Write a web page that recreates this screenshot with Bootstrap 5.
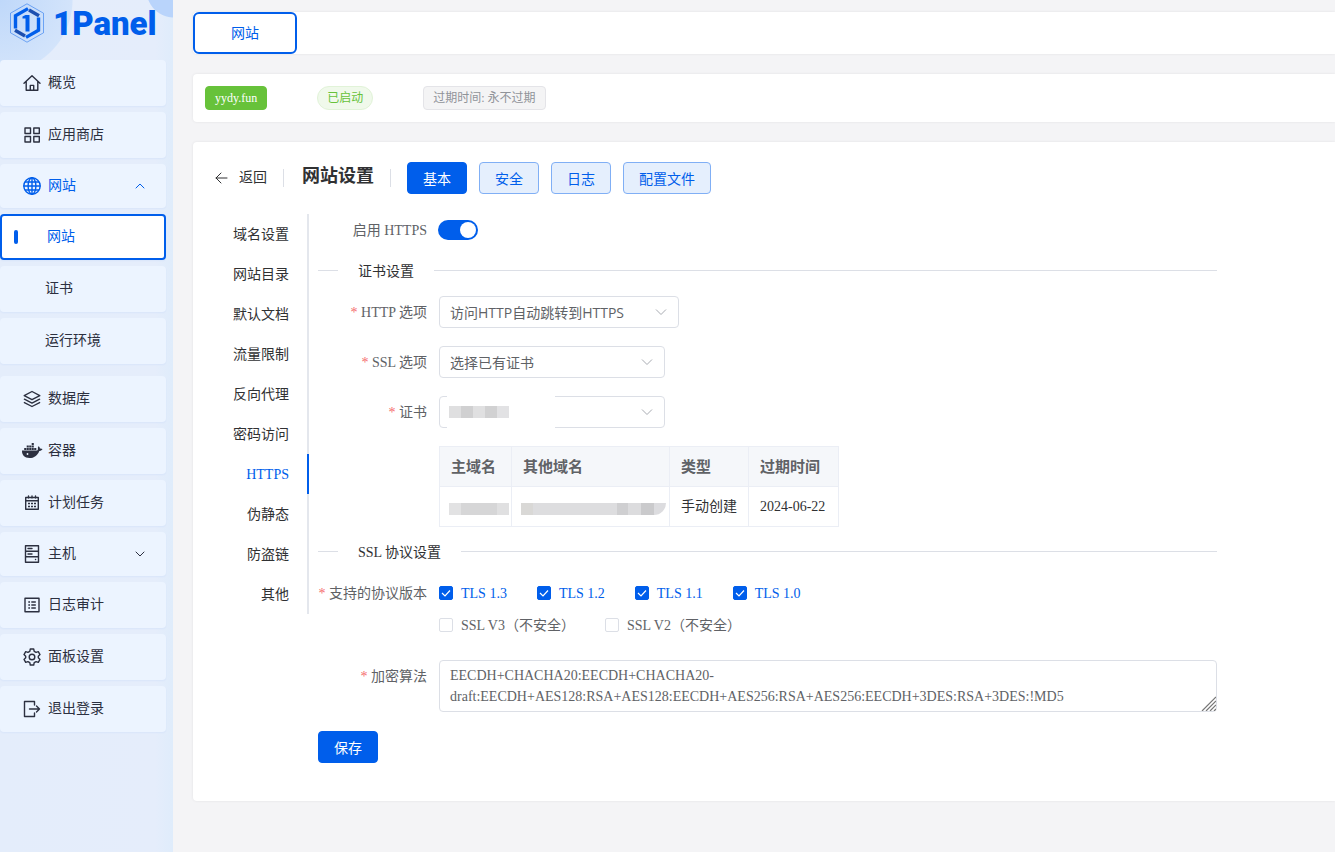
<!DOCTYPE html>
<html lang="zh-CN">
<head>
<meta charset="utf-8">
<meta name="viewport" content="width=device-width, initial-scale=1">
<title>1Panel</title>
<link href="https://cdn.jsdelivr.net/npm/bootstrap@5.3.0/dist/css/bootstrap.min.css" rel="stylesheet">
<style>
:root{--brand:#005eeb;--ink:#303133;--soft:#606266;--line:#dcdfe6}
body{font-family:"Liberation Serif","Noto Sans CJK SC",serif;font-size:14px;line-height:20px;color:var(--ink);background:#f4f4f6}
a{color:inherit;text-decoration:none}
.sans{font-family:"Open Sans","Noto Sans CJK SC",sans-serif}
.side{width:173px;background:
  radial-gradient(circle at 174px -10px,#b9d4fb 0 27px,transparent 28px),
  radial-gradient(circle at 0 0,#bfd8fa 0,#d3e4fb 72px,transparent 73px),
  linear-gradient(90deg,#e4edfb,#e5edfb 155px,#dfecfb)}
.brand{height:60px;padding:3px 0 0 9px}
.brand-name{font:900 33px/42px Roboto,sans-serif;color:var(--brand)}
.menu-item{height:46px;width:166px;margin-bottom:6px;padding-left:23px;border-radius:4px;background:#ecf4ff;box-shadow:0 1px 2px rgba(0,94,235,.05);color:#2c3040}
.menu-item svg{width:18px;height:18px;margin-right:7px}
.menu-parent{height:44px}
.menu-parent.open{color:var(--brand)}
.menu-parent .chev{width:10px;height:10px;margin:0 21px 0 auto;stroke-width:1}
.sub-item{padding-left:45px}
.sub-item.current{background:#fff;border:2px solid var(--brand);padding-left:12px;color:var(--brand)}
.sub-item.current::before{content:"";width:4px;height:14px;border-radius:2px;background:var(--brand);margin-right:29px}
.ic{fill:none;stroke:currentColor;stroke-width:1.4;stroke-linejoin:round;stroke-linecap:round;flex:none}
.main{padding:12px 0 0 20px}
.panel{background:#fff;border-radius:4px 0 0 4px;box-shadow:0 0 3px rgba(0,0,0,.08)}
.info-panel{margin-top:20px;padding:12px}
.set-panel{margin-top:20px;padding:20px 0 38px 7px}
.set-head{padding-left:15px;margin-bottom:20px}
.tab-btn{width:104px;height:42px;border:2px solid var(--brand);border-radius:6px;background:#fff;color:var(--brand);padding:0}
.chip{height:24px;padding:0 9px;border:1px solid;border-radius:4px;font-size:12px;line-height:22px}
.chip-site{background:#67c23a;border-color:#67c23a;color:#fff}
.chip-on{background:#f0f9eb;border-color:#e1f3d8;color:#67c23a;border-radius:12px;margin:0 50px}
.chip-info{background:#f4f4f5;border-color:#e4e4e8;color:#909399}
.vr-line{width:1px;height:18px;background:var(--line);margin:0 16px}
.page-title{font-size:18px;line-height:24px;font-weight:700;margin:0 0 4px 2px}
.act{height:32px;padding:1px 15px 0;font-size:14px;line-height:28px;border-radius:4px;border:1px solid #80aff5;background:#e5effd;color:var(--brand)}
.act.main-act,.act.main-act:hover{background:var(--brand);border-color:var(--brand);color:#fff}
.back{gap:10px;line-height:22px}
.side-nav{width:100px;margin-left:9px;border-right:2px solid #e4e7ed}
.side-nav a{height:40px;line-height:42px;padding-right:18px;text-align:right;margin-right:-2px;border-right:2px solid transparent}
.side-nav a.current{color:var(--brand);border-color:var(--brand)}
.settings{max-width:899px;margin-left:9px}
.field{margin-bottom:18px}
.field-lg{margin-bottom:19px}
.field-label{width:109px;line-height:32px;padding-top:1px;height:32px;text-align:right;color:var(--soft);margin-right:12px;flex:none;white-space:nowrap}
.req::before{content:"* ";color:#f56c6c}
.form-select{height:32px;padding:0 36px 0 10px;font-size:14px;border:1px solid var(--line);border-radius:4px;color:var(--soft);background-size:12px 12px;background-position:right 11px center;background-image:url("data:image/svg+xml,%3Csvg xmlns='http://www.w3.org/2000/svg' viewBox='0 0 12 12'%3E%3Cpath d='M1 3.5 6 8.5 11 3.5' fill='none' stroke='%23a8abb2'/%3E%3C/svg%3E")}
.w-mode{width:240px}.w-cert{width:226px}
.form-switch .form-check-input{width:40px;height:20px;margin:0 0 0 -1px;border:0;background-size:20px 16px;background-color:#dcdfe6;
 background-image:url("data:image/svg+xml,%3Csvg xmlns='http://www.w3.org/2000/svg' viewBox='0 0 20 16'%3E%3Ccircle cx='10' cy='8' r='8' fill='white'/%3E%3C/svg%3E")!important}
.form-switch .form-check-input:checked{background-color:var(--brand);background-position:right center}
.section-head{height:50px}
.section-head::before,.section-head::after{content:"";height:1px;background:var(--line);width:20px;margin-bottom:2px}
.section-head::after{flex:1}
.section-head h2{font-size:14px;line-height:20px;font-weight:400;margin:0;padding:1px 20px 0}
.cert-table{width:399px;table-layout:fixed;margin:0;border-color:#ebeef5;color:var(--ink)}
.cert-table th,.cert-table td{height:40px;padding:0 0 0 11px;border:1px solid #ebeef5;vertical-align:middle;white-space:nowrap}
.cert-table th{font-size:15px;color:var(--soft);background:#f5f7fa}
.col-main{width:72px}.col-other{width:158px}.col-kind{width:79px}.col-due{width:90px}
.veil{top:-1px;left:8px;width:108px;height:34px;background:#fff;padding:11px 0 0 2px}
.mosaic{height:12px;width:60px;background:linear-gradient(90deg,#dfdfe0 20%,#d0d0d1 20% 40%,#e0e0e1 40% 60%,#d1d1d2 60% 80%,#e2e2e4 80%)}
.mosaic-a{margin:4px 0 0 -2px;background:linear-gradient(90deg,#e2e2e3 20%,#d6d6d7 20% 80%,#e0e0e1 80%)}
.mosaic-b{width:145px;margin:4px 0 0 -2px;border-radius:0 0 12px 0;background:linear-gradient(90deg,#d9d8d6 8%,#dddddf 8% 66%,#cfcfd1 66% 74%,#dcdcde 74% 83%,#cacacc 83% 92%,#dcdcdf 92%)}
.opt{height:32px;display:flex;align-items:center;margin-right:30px}
.opt .form-check-input{width:14px;height:14px;margin:0 8px 0 0;border:1px solid var(--line);border-radius:2px;float:none}
.opt .form-check-input:checked{background-color:var(--brand);border-color:var(--brand);background-size:12px 12px;background-image:url("data:image/svg+xml,%3Csvg xmlns='http://www.w3.org/2000/svg' viewBox='0 0 12 12'%3E%3Cpath d='M2 6 5 9 10 3.500' fill='none' stroke='white' stroke-width='1.200'/%3E%3C/svg%3E")}
.opt .form-check-input:checked+label{color:var(--brand)}
.opt label{color:var(--soft);padding-top:1px}
.cipher{height:52px;min-height:52px;padding:4px 10px;font-size:14px;line-height:21px;border:1px solid var(--line);border-radius:4px;color:var(--soft);overflow:hidden}
.cipher::-webkit-resizer{background:url("data:image/svg+xml,%3Csvg xmlns='http://www.w3.org/2000/svg' width='15' height='15'%3E%3Cpath d='M1 15 15 1M5 15 15 5M9 15 15 9M13 15 15 13' stroke='%23777' stroke-width='1.2'/%3E%3C/svg%3E") right bottom no-repeat}
</style>
</head>
<body>
<div class="d-flex min-vh-100">
<aside class="side flex-shrink-0">
  <a href="#" class="brand d-flex align-items-start">
    <svg width="36" height="40" viewBox="0 0 36 40" fill="none" stroke="#005eeb" class="me-2 flex-shrink-0"><path d="M18 .8 34.5 10.2V29.800L18 39.200 1.500 29.800V10.200Z" stroke-width=".8" opacity=".6"/><path d="M19 5.600 6.500 12.800V25.500" stroke-width="3.400"/><path d="M17 34.400 29.500 27.200V14.500" stroke-width="3.400"/><path d="M6 27.200 16 33M20 7 30 12.800" stroke="#1c4fb0" stroke-width="3.400"/><path d="M13.500 13.500 16.500 12H20.500V28.500H16.500V15.500H13.500Z" fill="#005eeb" stroke="none"/></svg>
    <span class="brand-name">1Panel</span>
  </a>
  <nav>
    <a href="#" class="menu-item d-flex align-items-center"><svg class="ic" viewBox="0 0 18 18"><path d="M1 9.200 9 1.800l8 7.400M3.200 7.500v8.800h11.600V7.500M7.300 16v-4.600h3.400V16"/></svg>概览</a>
    <a href="#" class="menu-item d-flex align-items-center"><svg class="ic" viewBox="0 0 18 18"><path d="M2 2h5.500v5.500H2zM10.800 2h5.500v5.500h-5.500zM2 10.500h5.500V16H2zM10.800 10.500h5.500V16h-5.500z"/></svg>应用商店</a>
    <a href="#" class="menu-item menu-parent open d-flex align-items-center"><svg class="ic" viewBox="0 0 18 18"><circle cx="9" cy="9" r="8.200"/><ellipse cx="9" cy="9" rx="3.900" ry="8.200"/><path d="M9 1v16M1 9h16M2.200 5h13.600M2.200 13h13.600"/></svg>网站<svg class="ic chev" viewBox="0 0 10 10"><path d="M1 7 5 3l4 4"/></svg></a>
    <div class="pb-1 mb-2">
      <a href="#" class="menu-item sub-item current d-flex align-items-center">网站</a>
      <a href="#" class="menu-item sub-item d-flex align-items-center">证书</a>
      <a href="#" class="menu-item sub-item d-flex align-items-center mb-0">运行环境</a>
    </div>
    <a href="#" class="menu-item d-flex align-items-center"><svg class="ic" viewBox="0 0 18 18"><path d="M9 1.500 16.800 5.600 9 9.700 1.200 5.600ZM1.400 9.200 9 13.100l7.600-3.900M1.400 12.600 9 16.500l7.600-3.900"/></svg>数据库</a>
    <a href="#" class="menu-item d-flex align-items-center"><svg viewBox="0 1 18 16" fill="currentColor" class="flex-shrink-0 overflow-visible"><path d="M-1 8.600h14.700c.8-.4 1.200-.8 1.300-1.700-.4-1 0-2 .6-2.700.9.600 1.300 1.400 1.300 2.400.9-.2 1.800 0 2.600.5-.5 1.300-1.700 1.900-3.200 1.800C14.500 13.500 11 16 6.500 16 1.500 16-1.200 13.200-1 8.600ZM1.200 6h2.100v2.100H1.200zM3.700 6h2.100v2.100H3.700zM6.200 6h2.100v2.100H6.200zM8.700 6h2.100v2.100H8.700zM11.200 6h2.100v2.100h-2.100zM3.700 3.500h2.100v2.100H3.700zM6.200 3.500h2.100v2.100H6.200zM8.700 3.500h2.100v2.100H8.700zM8.700 1h2.100v2.100H8.700z"/><circle cx="4.500" cy="12" r=".9" fill="#ecf4ff"/></svg>容器</a>
    <a href="#" class="menu-item d-flex align-items-center"><svg class="ic" viewBox="0 0 18 18"><path d="M2.700 3.500h12.600v11.800H2.700zM2.700 6.800h12.600M5.500 2v2M9 2v2M12.500 2v2"/><path stroke-width="1.600" stroke-linecap="butt" d="M5 9.500h2M8 9.500h2M11 9.500h2M5 12.500h2M8 12.500h2M11 12.500h2"/></svg>计划任务</a>
    <a href="#" class="menu-item menu-parent d-flex align-items-center"><svg class="ic" viewBox="0 0 18 18"><path d="M2.500.8h13v16.400h-13zM2.500 6.200h13M2.500 11.700h13M5 3.500h4M5 9h4M12.500 14.500h.1"/></svg>主机<svg class="ic chev" viewBox="0 0 10 10"><path d="M1 3 5 7l4-4"/></svg></a>
    <a href="#" class="menu-item d-flex align-items-center"><svg class="ic" viewBox="0 0 18 18"><path d="M2 2.200h14v13.600H2z"/><path stroke-linecap="butt" d="M5.300 6h1.700M5.300 9h1.700M5.300 12h1.700M8.300 6h4.500M8.300 9h4.500M8.300 12h4.500"/></svg>日志审计</a>
    <a href="#" class="menu-item d-flex align-items-center"><svg class="ic" viewBox="0 0 18 18"><path d="M7.300 1h3.400l.5 2.300 1.900 1.100 2.200-.7L17 6.600l-1.700 1.600v1.600l1.700 1.600-1.700 2.900-2.200-.7-1.900 1.100-.5 2.300H7.300l-.5-2.300-1.900-1.100-2.200.7L1 11.400l1.700-1.600V8.200L1 6.600l1.700-2.900 2.200.7 1.900-1.100Z"/><circle cx="9" cy="9" r="2.800"/></svg>面板设置</a>
    <a href="#" class="menu-item d-flex align-items-center"><svg class="ic" viewBox="0 0 18 18"><path d="M11.500 5V1.500h-10v15h10V13M6.500 9h10M13.500 6l3 3-3 3"/></svg>退出登录</a>
  </nav>
</aside>

<main class="main flex-grow-1">
  <div class="panel"><button class="tab-btn d-block sans">网站</button></div>
  <div class="panel info-panel d-flex">
    <span class="chip chip-site">yydy.fun</span>
    <span class="chip chip-on">已启动</span>
    <span class="chip chip-info">过期时间: 永不过期</span>
  </div>
  <section class="panel set-panel">
    <header class="set-head d-flex align-items-center">
      <a href="#" class="back d-flex align-items-center"><svg class="ic" width="14" height="14" viewBox="0 0 14 14"><path stroke-width="1" d="M12 7H1M6 2 1 7l5 5"/></svg><span>返回</span></a>
      <span class="vr-line"></span>
      <h1 class="page-title">网站设置</h1>
      <span class="vr-line"></span>
      <div class="d-flex sans gap-2 flex-wrap column-gap">
        <button class="btn act main-act me-1">基本</button>
        <button class="btn act me-1">安全</button>
        <button class="btn act me-1">日志</button>
        <button class="btn act">配置文件</button>
      </div>
    </header>
    <div class="d-flex align-items-start">
      <nav class="side-nav d-flex flex-column flex-shrink-0">
        <a href="#">域名设置</a><a href="#">网站目录</a><a href="#">默认文档</a><a href="#">流量限制</a><a href="#">反向代理</a><a href="#">密码访问</a><a href="#" class="current">HTTPS</a><a href="#">伪静态</a><a href="#">防盗链</a><a href="#">其他</a>
      </nav>
      <form class="settings flex-grow-1">
        <div class="d-flex align-items-center">
          <label class="field-label" for="https">启用 HTTPS</label>
          <div class="form-switch p-0 d-flex"><input class="form-check-input" type="checkbox" role="switch" id="https" checked></div>
        </div>
        <div class="section-head d-flex align-items-center"><h2>证书设置</h2></div>
        <div class="field d-flex">
          <label class="field-label req" for="mode">HTTP 选项</label>
          <select id="mode" class="form-select sans w-mode"><option>访问HTTP自动跳转到HTTPS</option></select>
        </div>
        <div class="field d-flex">
          <label class="field-label req" for="ssl">SSL 选项</label>
          <select id="ssl" class="form-select sans w-cert"><option>选择已有证书</option></select>
        </div>
        <div class="field d-flex">
          <label class="field-label req" for="cert">证书</label>
          <div class="position-relative">
            <select id="cert" class="form-select sans w-cert"><option></option></select>
            <div class="veil position-absolute pe-none"><div class="mosaic"></div></div>
          </div>
        </div>
        <div class="d-flex">
          <span class="field-label"></span>
          <table class="cert-table table">
            <colgroup><col class="col-main"><col class="col-other"><col class="col-kind"><col class="col-due"></colgroup>
            <thead><tr><th>主域名</th><th>其他域名</th><th>类型</th><th>过期时间</th></tr></thead>
            <tbody><tr><td><div class="mosaic mosaic-a"></div></td><td><div class="mosaic mosaic-b"></div></td><td>手动创建</td><td>2024-06-22</td></tr></tbody>
          </table>
        </div>
        <div class="section-head d-flex align-items-center"><h2>SSL 协议设置</h2></div>
        <div class="field-lg d-flex">
          <span class="field-label req">支持的协议版本</span>
          <div>
            <div class="d-flex">
              <div class="opt"><input class="form-check-input" type="checkbox" id="t3" checked><label for="t3">TLS 1.3</label></div>
              <div class="opt"><input class="form-check-input" type="checkbox" id="t2" checked><label for="t2">TLS 1.2</label></div>
              <div class="opt"><input class="form-check-input" type="checkbox" id="t1" checked><label for="t1">TLS 1.1</label></div>
              <div class="opt"><input class="form-check-input" type="checkbox" id="t0" checked><label for="t0">TLS 1.0</label></div>
            </div>
            <div class="d-flex">
              <div class="opt"><input class="form-check-input" type="checkbox" id="v3"><label for="v3">SSL V3（不安全）</label></div>
              <div class="opt"><input class="form-check-input" type="checkbox" id="v2"><label for="v2">SSL V2（不安全）</label></div>
            </div>
          </div>
        </div>
        <div class="field-lg d-flex">
          <label class="field-label req" for="cipher">加密算法</label>
          <textarea id="cipher" class="form-control cipher" spellcheck="false">EECDH+CHACHA20:EECDH+CHACHA20-draft:EECDH+AES128:RSA+AES128:EECDH+AES256:RSA+AES256:EECDH+3DES:RSA+3DES:!MD5</textarea>
        </div>
        <button type="button" class="btn act main-act sans">保存</button>
      </form>
    </div>
  </section>
</main>
</div>
<script src="https://cdn.jsdelivr.net/npm/bootstrap@5.3.0/dist/js/bootstrap.bundle.min.js"></script>
</body>
</html>
